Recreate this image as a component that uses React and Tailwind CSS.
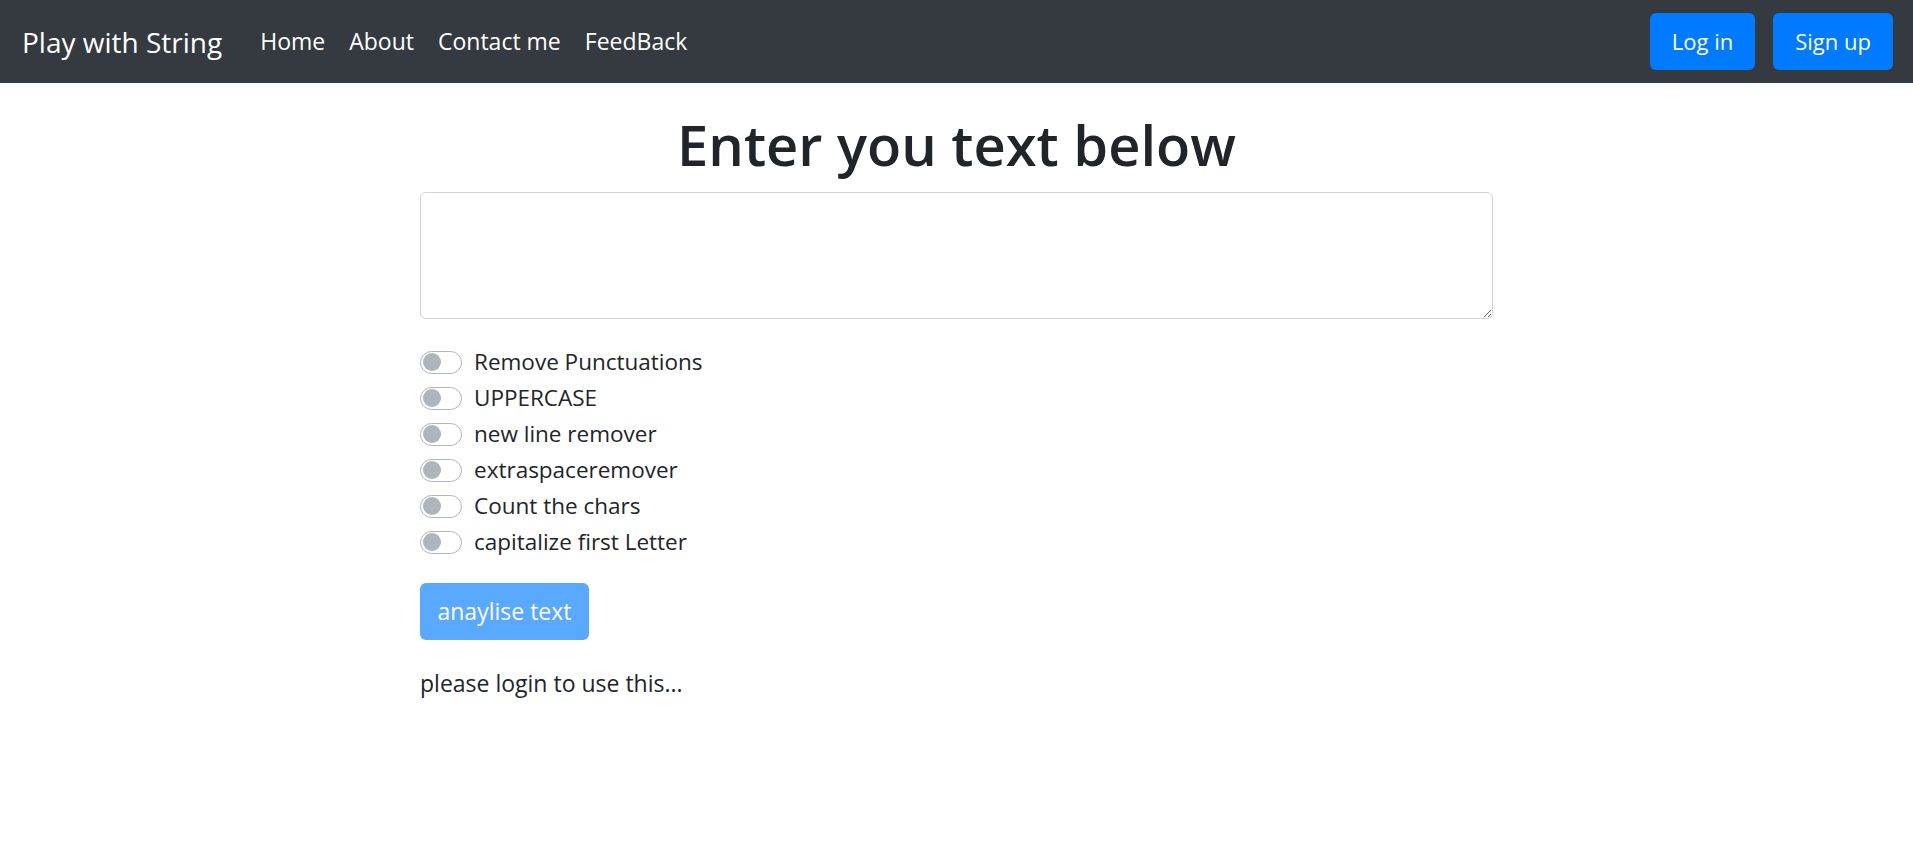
import React from "react";

const font = { fontFamily: '"Open Sans", "Noto Sans", sans-serif' };

function Toggle({ label }) {
  return (
    <div className="flex items-center h-[36px]">
      <span className="relative inline-block w-[42px] h-[23px] rounded-full border border-[#adb5bd] bg-white">
        <span className="absolute left-[2px] top-[1.5px] w-[18px] h-[18px] rounded-full bg-[#adb5bd]" />
      </span>
      <span className="ml-[12px] text-[22.5px] text-[#212529] leading-[36px]">{label}</span>
    </div>
  );
}

export default function App() {
  const toggles = [
    "Remove Punctuations",
    "UPPERCASE",
    "new line remover",
    "extraspaceremover",
    "Count the chars",
    "capitalize first Letter",
  ];
  return (
    <div className="min-h-[852px] bg-white" style={font}>
      <nav className="h-[83px] bg-[#343a40] flex items-center pl-[22px] pr-[20px]">
        <span className="text-[28px] text-white mr-[26px] leading-none">Play with String</span>
        <div className="flex items-center">
          {["Home", "About", "Contact me", "FeedBack"].map((l) => (
            <span key={l} className="px-[12px] text-[23px] text-white leading-none">
              {l}
            </span>
          ))}
        </div>
        <div className="ml-auto flex items-center gap-[18px]">
          <button className="h-[57px] w-[105px] rounded-[6px] bg-[#007bff] text-white text-[22px]">Log in</button>
          <button className="h-[57px] w-[120px] rounded-[6px] bg-[#007bff] text-white text-[22px]">Sign up</button>
        </div>
      </nav>
      <main className="w-[1073px] mx-auto">
        <h1 className="text-center text-[56px] font-semibold text-[#212529] leading-[67px] mt-[28px] mb-[14px]">
          Enter you text below
        </h1>
        <textarea className="block w-full h-[127px] border border-[#ced4da] rounded-[6px] bg-white outline-none" />
        <div className="mt-[25px] flex flex-col">
          {toggles.map((t) => (
            <Toggle key={t} label={t} />
          ))}
        </div>
        <button className="mt-[23px] h-[57px] w-[169px] rounded-[6px] bg-[#59a9ff] text-white text-[23px]">
          anaylise text
        </button>
        <p className="mt-[25px] text-[23px] leading-[36px] text-[#212529]">please login to use this...</p>
      </main>
    </div>
  );
}
